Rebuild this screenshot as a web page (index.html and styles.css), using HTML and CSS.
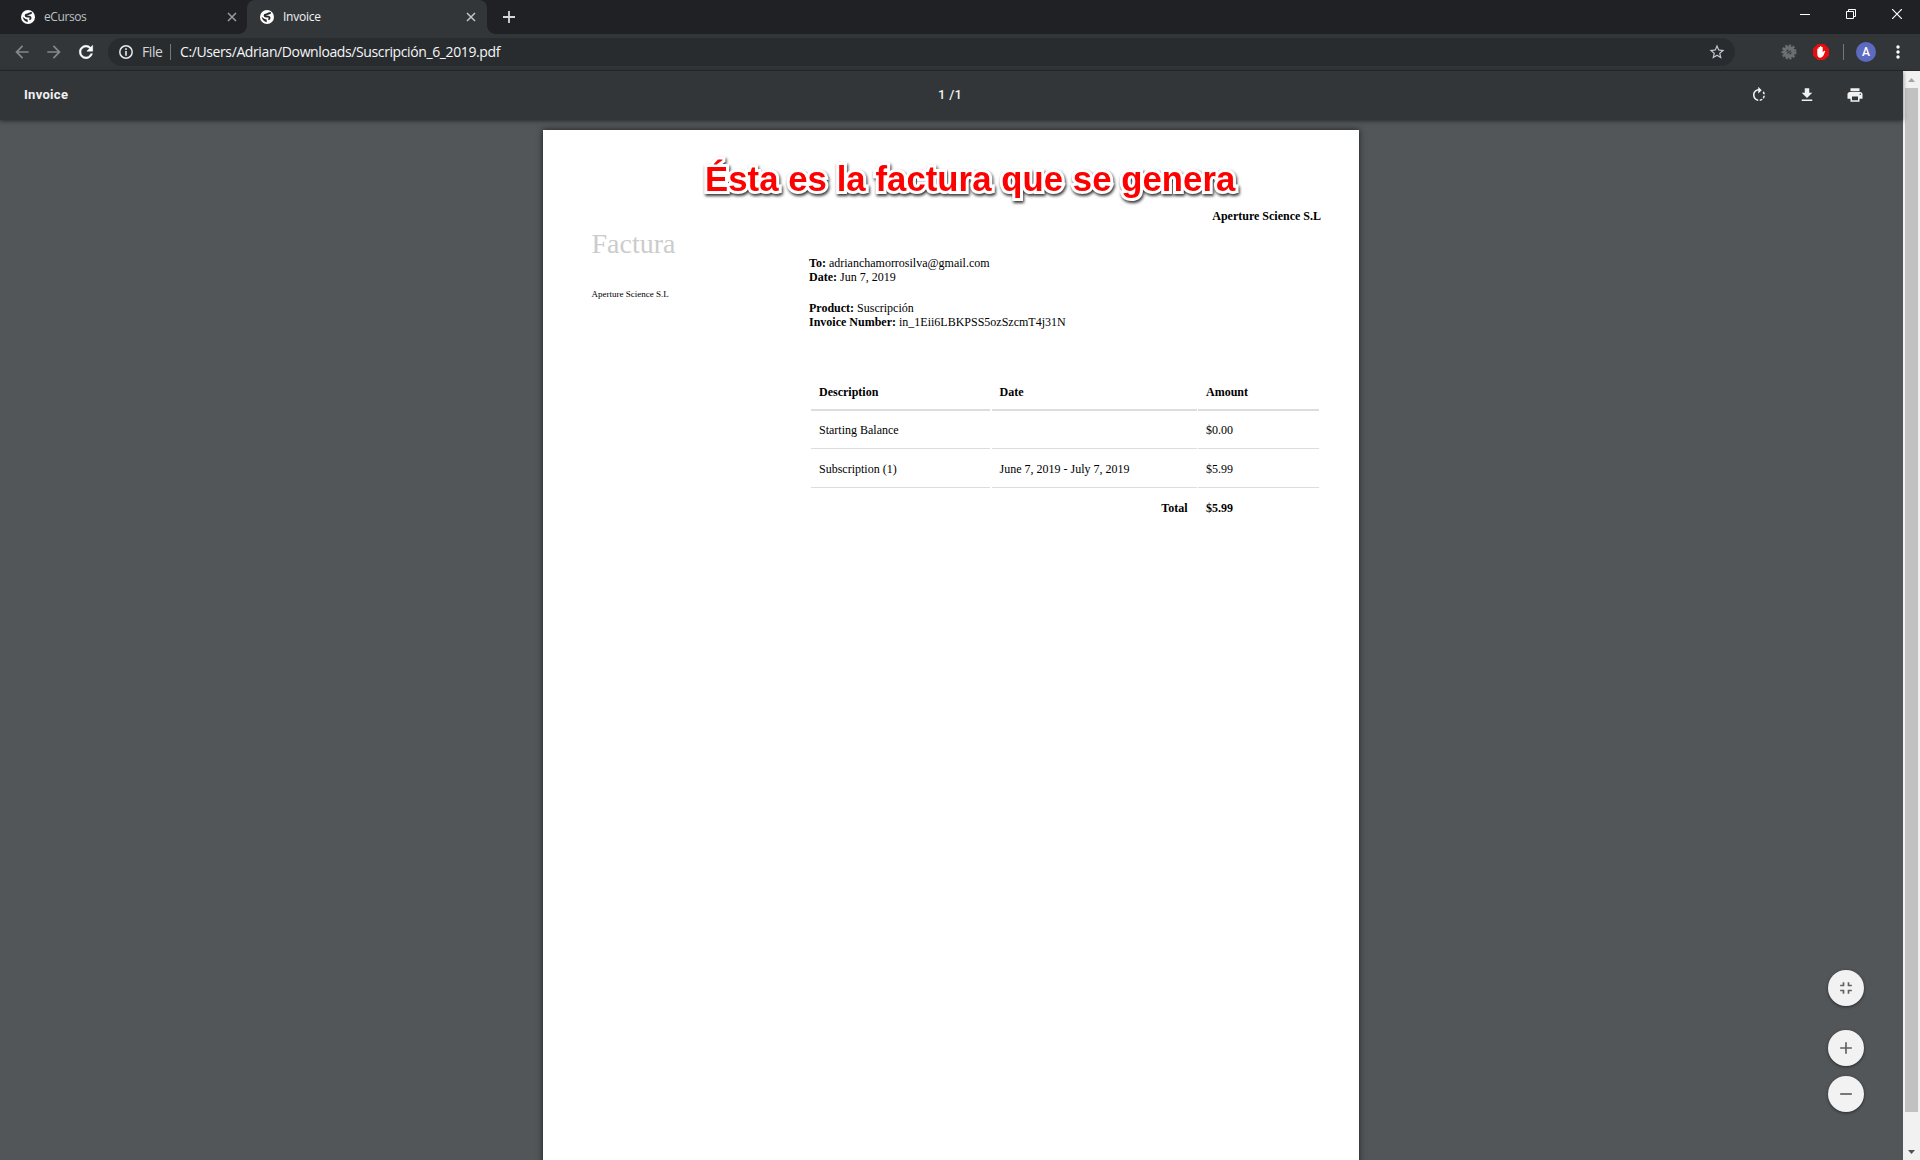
FILE: index.html
```html
<!DOCTYPE html>
<html lang="es">
<head>
<meta charset="utf-8">
<title>Invoice</title>
<link rel="stylesheet" href="styles.css">
</head>
<body>
<svg class="defs" width="0" height="0">
  <symbol id="globe" viewBox="0 0 14 14"><circle cx="7" cy="7" r="7" fill="#fff"/><path d="M10.800 3C8.800 2.800 8 4.200 6.300 4.300 4 4.400 4 6.300 6 6.500L8.300 6.700C10.200 7 10 9 8.300 9.500" fill="none" stroke="#25282b" stroke-width="1.800"/><path d="M1.600 6.800 4.600 9 6.600 9.600 6.800 12.200Q2.800 11.600 1.600 6.800Z" fill="#25282b"/></symbol>
  <symbol id="x" viewBox="0 0 10 10"><path d="M1 1 9 9M9 1 1 9" stroke="currentColor" stroke-width="1.500" fill="none"/></symbol>
</svg>
<div class="window">
  <div class="tabs">
    <div class="tab"><svg class="fav"><use href="#globe"/></svg><span class="label label-a">eCursos</span><svg class="close"><use href="#x"/></svg></div>
    <div class="tab active"><svg class="fav"><use href="#globe"/></svg><span class="label label-b">Invoice</span><svg class="close"><use href="#x"/></svg></div>
    <svg class="plus" viewBox="0 0 12 12"><path d="M6 0V12M0 6H12" stroke="#d5d7da" stroke-width="1.800"/></svg>
    <div class="controls">
      <svg width="10" height="10"><path d="M0 5.500H10" stroke="#fff"/></svg>
      <svg width="10" height="10" fill="none" stroke="#fff"><path d="M.5 2.500H7.500V9.500H.5ZM2.500 2.500V.5H9.500V7.500H7.500"/></svg>
      <svg width="10" height="10"><path d="M0 0 10 10M10 0 0 10" stroke="#fff" stroke-width="1.200"/></svg>
    </div>
  </div>
  <div class="toolbar">
    <svg class="nav" viewBox="0 0 24 24"><path fill="#85888b" d="M20 11H7.830l5.590-5.590L12 4l-8 8 8 8 1.410-1.410L7.830 13H20v-2z"/></svg>
    <svg class="nav" viewBox="0 0 24 24"><path fill="#85888b" d="M12 4l-1.410 1.410L16.170 11H4v2h12.170l-5.580 5.590L12 20l8-8z"/></svg>
    <svg class="nav" viewBox="0 0 24 24"><path fill="#fff" stroke="#fff" stroke-width=".6" d="M17.650 6.350C16.200 4.900 14.210 4 12 4c-4.420 0-7.990 3.580-7.990 8s3.570 8 7.990 8c3.730 0 6.840-2.550 7.730-6h-2.080c-.82 2.330-3.040 4-5.650 4-3.310 0-6-2.690-6-6s2.690-6 6-6c1.660 0 3.140.69 4.220 1.780L13 11h7V4l-2.350 2.350z"/></svg>
    <div class="omnibox">
      <svg class="info" viewBox="0 0 14 14"><circle cx="7" cy="7" r="6.200" fill="none" stroke="#e8eaed" stroke-width="1.500"/><path d="M7 3.200V4.900M7 6V10.700" stroke="#e8eaed" stroke-width="1.600"/></svg>
      <span class="scheme">File</span><i class="bar"></i><span class="url">C:/Users/Adrian/Downloads/Suscripción_6_2019.pdf</span>
      <svg class="star" viewBox="0 0 24 24"><path fill="#c5c9cd" d="M22 9.240l-7.190-.62L12 2 9.190 8.630 2 9.240l5.460 4.730L5.820 21 12 17.270 18.180 21l-1.630-7.030L22 9.240zM12 15.400l-3.760 2.270 1-4.280-3.320-2.880 4.380-.38L12 6.100l1.710 4.040 4.380.38-3.320 2.880 1 4.280L12 15.400z"/></svg>
    </div>
    <div class="extensions">
      <svg class="bug" viewBox="0 0 16 16"><circle cx="8" cy="8" r="6.300" fill="none" stroke="#6c6e70" stroke-width="2.500" stroke-dasharray="2.200 1.400"/><circle cx="8" cy="8" r="6" fill="#6c6e70"/><path d="M5.500 7.500 7.300 5.600M6.200 9.200 9.700 6.700M8.500 10.200 10.500 8.500" stroke="#323639" stroke-width="1.100"/></svg>
      <svg class="block" viewBox="0 0 16 16"><path d="M4.700 0H11.300L16 4.700V11.300L11.300 16H4.700L0 11.300V4.700Z" fill="#e50d0d"/><path d="M4.300 8.200V5Q4.300 4.400 4.900 4.400T5.500 5V3.500Q5.500 2.900 6.200 2.900T6.900 3.500V2.800Q6.900 2.100 7.600 2.100T8.300 2.800V3.200Q8.400 2.700 9 2.700T9.700 3.400V8.300L11 6.900Q12.200 6.400 12.200 7.300L10.600 11.300Q9.500 13.700 7.300 13.700 4.300 13.700 4.300 9.800Z" fill="#fff"/></svg>
      <i class="bar"></i><span class="avatar">A</span>
      <svg class="dots" viewBox="0 0 4 14" fill="#fff"><circle cx="2" cy="2" r="1.700"/><circle cx="2" cy="7" r="1.700"/><circle cx="2" cy="12" r="1.700"/></svg>
    </div>
  </div>
  <div class="content">
    <div class="viewer">
      <div class="pdfbar">
        <span class="title">Invoice</span><span class="pages">1 /1</span>
        <div class="actions">
          <svg viewBox="0 0 24 24"><path d="M15.550 5.550L11 1v3.070C7.060 4.560 4 7.920 4 12s3.050 7.440 7 7.930v-2.020c-2.840-.48-5-2.940-5-5.910s2.160-5.430 5-5.910V10l4.550-4.450zM19.930 11c-.17-1.390-.72-2.730-1.620-3.890l-1.420 1.420c.54.75.88 1.600 1.020 2.470h2.020zM13 17.900v2.020c1.390-.17 2.740-.71 3.900-1.610l-1.440-1.440c-.75.54-1.590.89-2.460 1.030zm3.890-2.420l1.420 1.410c.9-1.160 1.450-2.500 1.620-3.890h-2.020c-.14.870-.48 1.720-1.020 2.480z"/></svg>
          <svg viewBox="0 0 24 24"><path d="M19 9h-4V3H9v6H5l7 7 7-7zM5 18v2h14v-2H5z"/></svg>
          <svg viewBox="0 0 24 24"><path d="M19 8H5c-1.660 0-3 1.340-3 3v6h4v4h12v-4h4v-6c0-1.660-1.340-3-3-3zm-3 11H8v-5h8v5zm3-7c-.55 0-1-.45-1-1s.45-1 1-1 1 .45 1 1-.45 1-1 1zm-1-9H6v4h12V3z"/></svg>
        </div>
      </div>
      <div class="canvas">
        <div class="page">
          <div class="note">Ésta es la factura que se genera</div>
          <div class="vendor">Aperture Science S.L</div>
          <div class="invoice">
            <div class="side"><h1>Factura</h1><p>Aperture Science S.L</p></div>
            <div class="main">
              <p><b>To:</b> adrianchamorrosilva@gmail.com<br><b>Date:</b> Jun 7, 2019</p>
              <p class="second"><b>Product:</b> Suscripción<br><b>Invoice Number:</b> in_1Eii6LBKPSS5ozSzcmT4j31N</p>
              <div class="grid">
                <b class="head">Description</b><b class="head">Date</b><b class="head">Amount</b>
                <span class="first">Starting Balance</span><span class="first"></span><span class="first">$0.00</span>
                <span>Subscription (1)</span><span>June 7, 2019 - July 7, 2019</span><span>$5.99</span>
                <b class="total">Total</b><b class="sum">$5.99</b>
              </div>
            </div>
          </div>
        </div>
      </div>
      <div class="zoom">
        <div class="fab fit"><svg viewBox="0 0 24 24"><path d="M5 16h3v3h2v-5H5v2zm3-8H5v2h5V5H8v3zm6 11h2v-3h3v-2h-5v5zm2-11V5h-2v5h5V8h-3z"/></svg></div>
        <div class="fab"><svg viewBox="0 0 24 24"><path d="M19 13h-6v6h-2v-6H5v-2h6V5h2v6h6v2z"/></svg></div>
        <div class="fab"><svg viewBox="0 0 24 24"><path d="M19 13H5v-2h14v2z"/></svg></div>
      </div>
    </div>
    <div class="scrollbar">
      <svg class="arrow" viewBox="0 0 17 17"><path d="M5 11 8.500 7 12 11Z" fill="#a3a3a3"/></svg>
      <div class="thumb"></div>
      <svg class="arrow" viewBox="0 0 17 17"><path d="M5 7 8.500 11 12 7Z" fill="#505050"/></svg>
    </div>
  </div>
</div>
</body>
</html>
```
FILE: styles.css
```css
* { box-sizing: border-box; }
body { margin: 0; overflow: hidden; background: #525659; }
p, h1 { margin: 0; }
svg { display: block; flex: none; }
.defs { position: absolute; }
.window { display: flex; flex-direction: column; width: 1920px; height: 1160px; font-family: "Open Sans", sans-serif; }

.tabs { display: flex; height: 34px; background: #202124; }
.tab { display: flex; align-items: center; width: 247px; height: 34px; padding: 0 10px 0 21px; color: #bdc1c6; font-size: 12px; }
.tab.active { position: relative; width: 240px; padding: 0 11px 0 13px; border-radius: 8px 8px 0 0; background: #323639; color: #f1f3f4; }
.tab.active::before, .tab.active::after { content: ""; position: absolute; bottom: 0; width: 8px; height: 8px; }
.tab.active::before { left: -8px; background: radial-gradient(circle at 0 0, transparent 7.5px, #323639 8px); }
.tab.active::after { right: -8px; background: radial-gradient(circle at 100% 0, transparent 7.5px, #323639 8px); }
.fav { width: 14px; height: 14px; }
.label { flex: 1; margin-left: 9px; line-height: 16px; white-space: nowrap; }
.label-a { letter-spacing: -.4px; }
.label-b { letter-spacing: -.25px; }
.close { width: 10px; height: 10px; color: #9a9da1; }
.active .close { color: #c4c6c9; }
.plus { width: 12px; height: 12px; margin: 11px 0 0 16px; }
.controls { display: flex; gap: 36px; margin: 9px 18px 0 auto; }

.toolbar { display: flex; align-items: center; height: 37px; padding: 0 20px 0 12px; border-bottom: 1px solid #27292c; background: #323639; }
.nav { width: 20px; height: 20px; margin-right: 12px; }
.omnibox { display: flex; align-items: center; width: 1627px; height: 28px; padding: 0 9px 0 11px; border-radius: 14px; background: #282c2f; color: #f5f6f7; font-size: 14px; }
.info { width: 14px; height: 14px; }
.scheme { width: 20px; margin-left: 9px; color: #d4d7da; white-space: nowrap; letter-spacing: -.4px; }
.scheme, .url { padding-bottom: 1px; }
.bar { flex: none; width: 1px; height: 16px; background: #75787b; }
.omnibox .bar { margin: 0 9px 0 8px; }
.url { white-space: nowrap; letter-spacing: -.39px; }
.star { width: 18px; height: 18px; margin-left: auto; }
.extensions { display: flex; align-items: center; margin-left: auto; }
.bug { width: 16px; height: 16px; margin-right: 16px; }
.block { width: 16px; height: 16px; margin-right: 14px; }
.avatar { width: 20px; height: 20px; margin: 0 20px 0 12px; border-radius: 50%; background: #5c6bc0; color: #fff; font: 500 12px/21px Roboto, sans-serif; text-align: center; }
.dots { width: 4px; height: 14px; }

.content { display: flex; flex: 1; min-height: 0; }
.viewer { position: relative; display: flex; flex-direction: column; width: 1903px; background: #525659; }
.pdfbar { z-index: 1; display: grid; grid-template-columns: 914px 1fr auto; align-items: center; height: 49px; padding: 0 39px 1px 24px; background: #323639; box-shadow: 0 1px 4px rgba(0, 0, 0, .5); color: #f1f1f1; font: 500 13px/16px Roboto, sans-serif; }
.title { font-weight: 700; letter-spacing: .3px; }
.pages { letter-spacing: .3px; }
.actions { display: flex; gap: 30px; fill: #f1f1f1; }
.actions svg { width: 18px; height: 18px; }
.canvas { display: flex; flex: 1; justify-content: center; min-height: 0; padding: 10px 1px 0 0; overflow: hidden; }
.page { width: 816px; height: 1056px; background: #fff; box-shadow: 0 0 6px rgba(0, 0, 0, .65); color: #000; font: 12px/14px "Liberation Serif", serif; }
.note { height: 69px; padding: 29px 0 0 162px; color: #f00; font: 700 34.67px/40px "Liberation Sans", sans-serif; letter-spacing: .08px; white-space: nowrap; -webkit-text-stroke: 6px #fff; paint-order: stroke fill; stroke-linejoin: round; filter: drop-shadow(1.5px 2px 1.5px rgba(0, 0, 0, .8)); }
.vendor { padding: 10px 38px 0 0; font-weight: 700; text-align: right; }
.invoice { display: grid; grid-template-columns: 217.5px 511px; padding: 7px 0 0 48.5px; }
.side h1 { margin-top: -2px; color: #ccc; font-size: 28px; font-weight: 400; line-height: 32px; }
.side p { margin-top: 28px; font-size: 9px; line-height: 12px; }
.main { padding-top: 26px; }
.second { margin-top: 17px; }
.grid { display: grid; grid-template-columns: 179px 205px 121px; column-gap: 1.5px; margin: 43px 0 0 2px; line-height: 14px; }
.grid > * { height: 39px; padding: 13px 8px 0; border-bottom: 1px solid #ddd; white-space: nowrap; }
.grid .head { border-bottom-width: 2px; }
.grid .first { height: 38px; padding-top: 12px; }
.grid .total { grid-column: span 2; padding-right: 9px; border: 0; text-align: right; }
.grid .sum { border: 0; }

.zoom { position: absolute; top: 899px; left: 1828px; display: flex; flex-direction: column; gap: 10px; }
.fab { display: flex; align-items: center; justify-content: center; width: 36px; height: 36px; border-radius: 50%; background: #f2f2f2; box-shadow: 0 1px 3px rgba(0, 0, 0, .5); fill: #5f6062; }
.fit { margin-bottom: 14px; }
.fab svg { width: 20px; height: 20px; }

.scrollbar { display: flex; flex-direction: column; width: 17px; background: #f1f1f1; }
.arrow { width: 17px; height: 17px; }
.thumb { width: 13px; height: 1024px; margin: 0 0 31px 2px; background: #c1c1c1; }
```
